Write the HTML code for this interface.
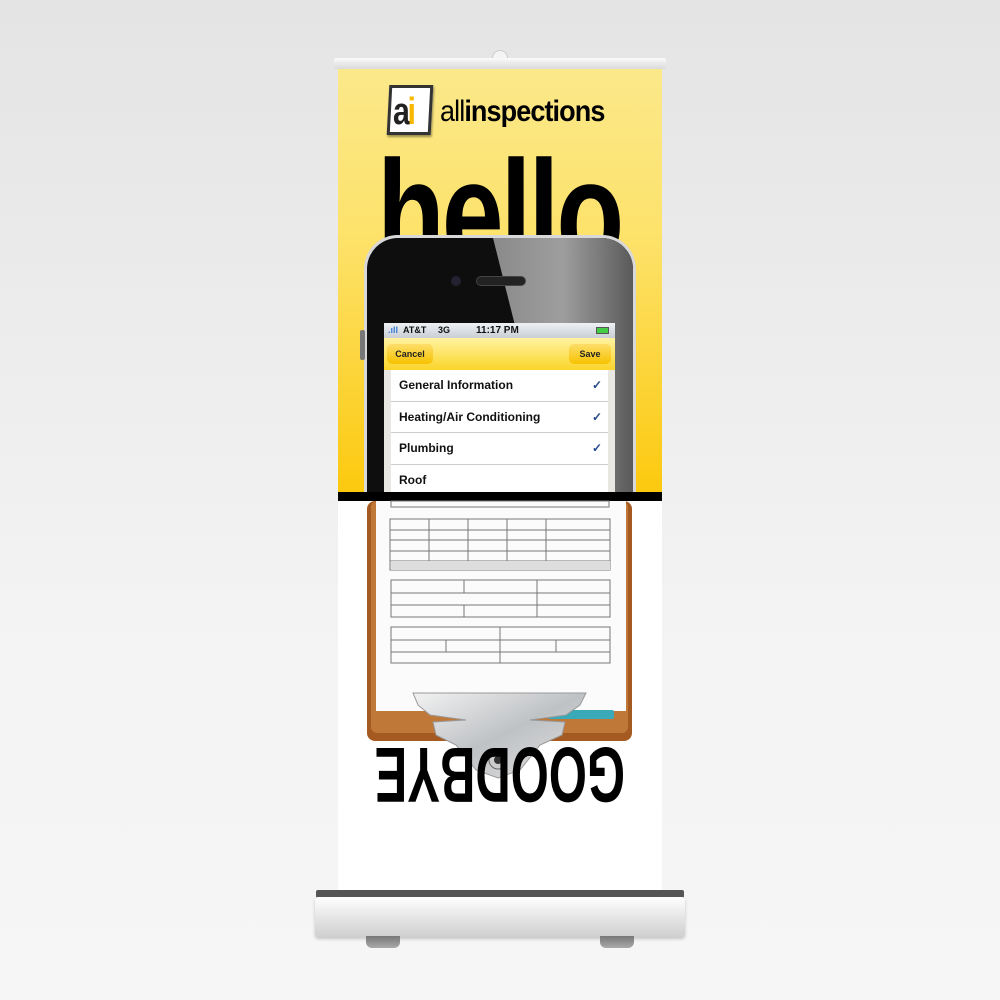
<!DOCTYPE html>
<html><head><meta charset="utf-8"><style>
*{margin:0;padding:0;box-sizing:border-box}
body{width:1000px;height:1000px;overflow:hidden;background:linear-gradient(#e4e4e4,#f3f3f3 60%,#f6f6f6);position:relative;font-family:"Liberation Sans",sans-serif}
.a{position:absolute}
</style></head><body>
<div class="a" style="left:492px;top:50px;width:16px;height:12px;border-radius:8px 8px 0 0;background:#f4f4f4;border:1px solid #ccc"></div>
<div class="a" style="left:334px;top:58px;width:332px;height:11px;background:linear-gradient(#fafafa,#d9d9d9);border-radius:2px"></div>
<div class="a" style="left:338px;top:69px;width:324px;height:424px;background:linear-gradient(#fbe88a,#fde26a 40%,#fcc90e)"></div>
<div class="a" style="left:338px;top:500px;width:324px;height:395px;background:#fff"></div>
<!-- logo -->
<div class="a" style="left:388px;top:85px;width:44px;height:50px;background:#fff;border:3px solid #333;transform:skewX(-3deg);box-shadow:1px 2px 2px rgba(0,0,0,.4)"></div>
<div class="a" style="left:393px;top:92px;font:bold 38px/40px 'Liberation Sans',sans-serif;color:#222;letter-spacing:-3px;transform:scaleX(0.8);transform-origin:0 0">a<span style="color:#f6b800">i</span></div>
<div class="a" style="left:440px;top:94px;font:bold 30px/36px 'Liberation Sans',sans-serif;color:#000;letter-spacing:-1px;transform:scaleX(0.9);transform-origin:0 0;white-space:nowrap"><span style="font-weight:normal">all</span>inspections</div>
<!-- hello -->
<div class="a" style="left:377px;top:118px;font:bold 150px/190px 'Liberation Sans',sans-serif;color:#000;letter-spacing:-4px;transform:scaleX(0.74);transform-origin:0 0">hello</div>
<!-- phone -->
<div class="a" style="left:364px;top:235px;width:272px;height:258px;overflow:hidden">
 <div style="width:272px;height:300px;border-radius:34px;background:#d8d8d8;padding:3px">
  <div style="width:100%;height:100%;border-radius:31px;background:#0e0e0e;position:relative;overflow:hidden">
   <svg class="a" style="left:0;top:0" width="266" height="294"><defs><linearGradient id="g" x1="0" x2="1"><stop offset="0" stop-color="#8a8a8a"/><stop offset="0.5" stop-color="#9e9e9e"/><stop offset="1" stop-color="#5a5a5a"/></linearGradient></defs><polygon points="126,0 266,0 266,294 200,294" fill="url(#g)"/></svg>
  </div>
 </div>
</div>
<div class="a" style="left:451px;top:276px;width:10px;height:10px;border-radius:5px;background:#223"></div>
<div class="a" style="left:476px;top:276px;width:50px;height:10px;border-radius:5px;background:#222;border:1px solid #444"></div>
<div class="a" style="left:360px;top:330px;width:5px;height:30px;background:#777;border-radius:2px"></div>
<!-- screen -->
<div class="a" style="left:384px;top:323px;width:231px;height:170px;background:#e9e7e2;overflow:hidden">
 <div style="height:15px;background:linear-gradient(#eef1f4,#c9ced4);font:bold 9px/15px 'Liberation Sans',sans-serif;color:#111;position:relative">
  <span class="a" style="left:4px;color:#3a7bd5">.ıll</span><span class="a" style="left:19px">AT&amp;T</span><span class="a" style="left:54px">3G</span><span class="a" style="left:92px;font-size:10px">11:17 PM</span>
  <span class="a" style="left:212px;top:4px;width:13px;height:7px;background:#4c4;border:1px solid #555"></span></div>
 <div style="height:32px;background:linear-gradient(#fff3a0,#fbd52a);position:relative;font:bold 9px/20px 'Liberation Sans',sans-serif;color:#222">
  <div class="a" style="left:3px;top:6px;width:46px;height:20px;border-radius:5px;background:linear-gradient(#fdde6a,#f7c200);text-align:center">Cancel</div>
  <div class="a" style="left:185px;top:6px;width:42px;height:20px;border-radius:5px;background:linear-gradient(#fdde6a,#f7c200);text-align:center">Save</div>
 </div>
 <div style="margin:0 7px;background:#fff;font:bold 12px/31px 'Liberation Sans',sans-serif;color:#111">
  <div style="height:31.5px;border-bottom:1px solid #ccc;padding-left:8px;position:relative">General Information<span class="a" style="right:6px;color:#234a8c">✓</span></div>
  <div style="height:31.5px;border-bottom:1px solid #ccc;padding-left:8px;position:relative">Heating/Air Conditioning<span class="a" style="right:6px;color:#234a8c">✓</span></div>
  <div style="height:31.5px;border-bottom:1px solid #ccc;padding-left:8px;position:relative">Plumbing<span class="a" style="right:6px;color:#234a8c">✓</span></div>
  <div style="height:31.5px;padding-left:8px">Roof</div>
 </div>
</div>
<div class="a" style="left:338px;top:492px;width:324px;height:9px;background:#000"></div>
<!-- clipboard -->
<svg class="a" style="left:0;top:0" width="1000" height="1000">
 <defs><linearGradient id="m" x1="0" x2="1" y1="0" y2="1"><stop offset="0" stop-color="#f2f2f2"/><stop offset="0.5" stop-color="#bfc2c5"/><stop offset="1" stop-color="#e0e0e0"/></linearGradient></defs>
 <rect x="367" y="501" width="265" height="240" rx="8" fill="#a45a20"/>
 <rect x="371" y="501" width="257" height="232" rx="6" fill="#c07838"/>
 <rect x="376" y="501" width="250" height="210" fill="#fbfbfb"/>
 <g fill="none" stroke="#777" stroke-width="1">
  <rect x="391" y="501" width="218" height="6"/>
  <rect x="390" y="519" width="220" height="51"/>
  <path d="M390 530H610M390 540H610M390 551H610M390 561H610M429 519V561M468 519V561M507 519V561M546 519V561"/>
  <rect x="391" y="580" width="219" height="37"/>
  <path d="M391 593H610M391 605H610M464 580V593M464 605V617M537 580V617"/>
  <rect x="391" y="627" width="219" height="36"/>
  <path d="M391 640H610M391 652H610M500 627V663M446 640V652M556 640V652"/>
 </g>
 <rect x="391" y="561" width="219" height="9" fill="#ddd"/>
 <rect x="548" y="710" width="66" height="9" rx="2" fill="#3aaab8"/>
 <path d="M413 693H586L580 705L566 715L530 720L565 722L562 735L540 745L520 770L498 778L476 770L456 745L436 735L433 722L466 720L430 715L418 705Z" fill="url(#m)" stroke="#999"/>
 <circle cx="498" cy="760" r="9" fill="#ccc" stroke="#666"/>
 <circle cx="498" cy="760" r="4" fill="#333"/>
</svg>
<!-- GOODBYE -->
<div class="a" style="left:373px;top:738px;width:252px;height:70px;transform:rotate(180deg);overflow:visible">
 <div style="font:bold 62px/70px 'Liberation Sans',sans-serif;color:#000;letter-spacing:0;transform:scale(0.79,1.25);transform-origin:0 50%;white-space:nowrap">GOODBYE</div>
</div>
<!-- base -->
<div class="a" style="left:316px;top:890px;width:368px;height:8px;background:#555;border-radius:2px"></div>
<div class="a" style="left:315px;top:897px;width:370px;height:40px;border-radius:3px;background:linear-gradient(#fff,#e6e6e6 50%,#cfcfcf);box-shadow:0 2px 3px rgba(0,0,0,.2)"></div>
<div class="a" style="left:366px;top:936px;width:34px;height:12px;border-radius:0 0 6px 6px;background:linear-gradient(#777,#aaa)"></div>
<div class="a" style="left:600px;top:936px;width:34px;height:12px;border-radius:0 0 6px 6px;background:linear-gradient(#777,#aaa)"></div>
</body></html>
